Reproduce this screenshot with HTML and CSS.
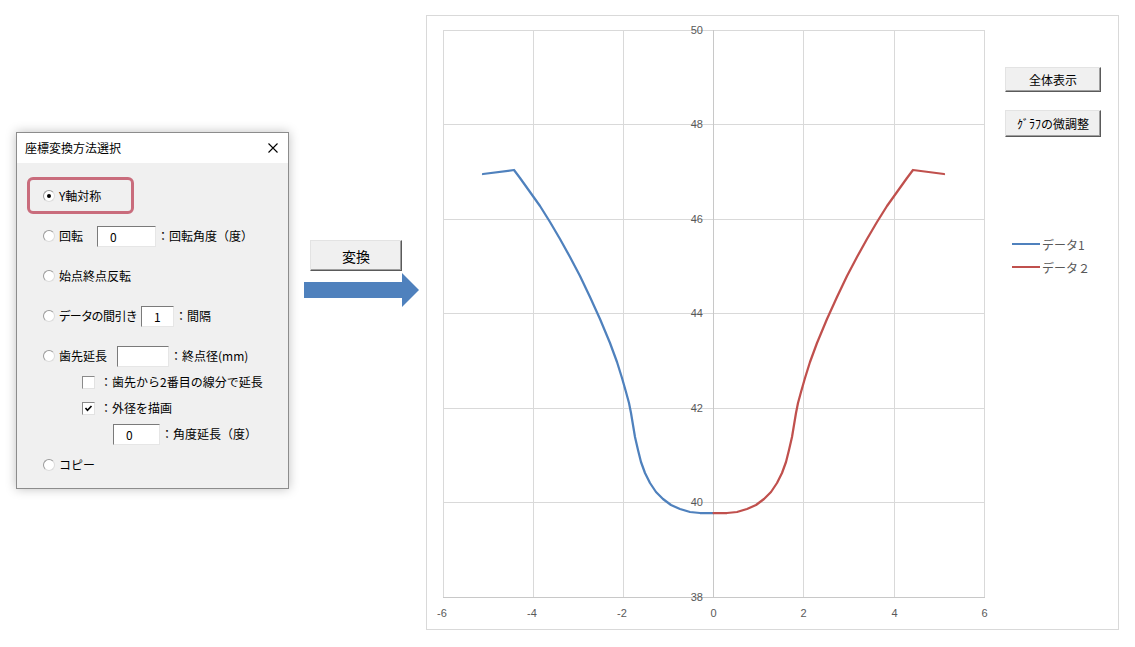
FILE: index.html
```html
<!DOCTYPE html>
<html lang="ja">
    <head>
        <meta charset="UTF-8">
        <title>座標変換方法選択</title>
        <link rel="stylesheet" href="styles.css">
    </head>

    <body>
        <div class="page">
            <!-- Dialog -->
            <div class="dialog">
                <div class="dialog-title">
                    <span>座標変換方法選択</span>
                    <svg class="close" width="10" height="10" viewBox="0 0 10 10">
                        <path d="M0.5 0.5 L9.5 9.5 M9.5 0.5 L0.5 9.5" stroke="#000" stroke-width="1.1" fill="none"/>
                    </svg>
                </div>
                <div class="dialog-body">
                    <div class="picked">
                        <span class="radio on"></span>
                        <span>Y軸対称</span>
                    </div>
                    <div class="row first">
                        <span class="radio"></span>
                        <span class="lbl" style="width:38px">回転</span>
                        <input class="field" type="text" value="0" style="width:59px">
                        <span class="after">：回転角度（度）</span>
                    </div>
                    <div class="row">
                        <span class="radio"></span>
                        <span>始点終点反転</span>
                    </div>
                    <div class="row">
                        <span class="radio"></span>
                        <span class="lbl narrow" style="width:82px">データの間引き</span>
                        <input class="field" type="text" value="1" style="width:33px">
                        <span class="after">：間隔</span>
                    </div>
                    <div class="row">
                        <span class="radio"></span>
                        <span class="lbl" style="width:58px">歯先延長</span>
                        <input class="field" type="text" value="" style="width:52px">
                        <span class="after">：終点径(mm)</span>
                    </div>
                    <div class="row sub">
                        <span class="check"></span>
                        <span class="after-check">：歯先から2番目の線分で延長</span>
                    </div>
                    <div class="row sub">
                        <span class="check">
                            <svg width="11" height="11" viewBox="0 0 11 11">
                                <path d="M2.5 5 L4.5 7.3 L8.5 3" stroke="#000" stroke-width="1.6" fill="none"/>
                            </svg>
                        </span>
                        <span class="after-check">：外径を描画</span>
                    </div>
                    <div class="row sub deep">
                        <input class="field" type="text" value="0" style="width:47px">
                        <span class="after">：角度延長（度）</span>
                    </div>
                    <div class="row last">
                        <span class="radio"></span>
                        <span>コピー</span>
                    </div>
                </div>
            </div>

            <!-- Convert button and arrow -->
            <div class="convert">
                <button class="convert-btn">変換</button>
                <svg class="arrow" width="115" height="34" viewBox="0 0 115 34">
                    <polygon points="0,9 98,9 98,0 115,17 98,34 98,25 0,25" fill="#4f81bd"/>
                </svg>
            </div>

            <!-- Chart -->
            <div class="chart">
                <svg class="plot" width="578" height="613" viewBox="0 0 578 613">
                    <g stroke="#d9d9d9" stroke-width="1">
                        <line x1="16.5" y1="14" x2="16.5" y2="582"/>
                        <line x1="106.5" y1="14" x2="106.5" y2="582"/>
                        <line x1="196.5" y1="14" x2="196.5" y2="582"/>
                        <line x1="376.5" y1="14" x2="376.5" y2="582"/>
                        <line x1="467.5" y1="14" x2="467.5" y2="582"/>
                        <line x1="557.5" y1="14" x2="557.5" y2="582"/>
                        <line x1="16" y1="14.5" x2="558" y2="14.5"/>
                        <line x1="16" y1="108.5" x2="558" y2="108.5"/>
                        <line x1="16" y1="203.5" x2="558" y2="203.5"/>
                        <line x1="16" y1="297.5" x2="558" y2="297.5"/>
                        <line x1="16" y1="392.5" x2="558" y2="392.5"/>
                        <line x1="16" y1="486.5" x2="558" y2="486.5"/>
                    </g>
                    <g stroke="#c8c8c8" stroke-width="1">
                        <line x1="16" y1="581.5" x2="558" y2="581.5"/>
                        <line x1="286.5" y1="14" x2="286.5" y2="582"/>
                    </g>

                    <g class="ticks" text-anchor="end">
                        <text x="276" y="18">50</text>
                        <text x="276" y="112">48</text>
                        <text x="276" y="207">46</text>
                        <text x="276" y="301">44</text>
                        <text x="276" y="396">42</text>
                        <text x="276" y="490">40</text>
                        <text x="276" y="585">38</text>
                    </g>
                    <g class="ticks" text-anchor="middle">
                        <text x="15" y="601">-6</text>
                        <text x="105" y="601">-4</text>
                        <text x="195" y="601">-2</text>
                        <text x="286.5" y="601">0</text>
                        <text x="376.5" y="601">2</text>
                        <text x="467.5" y="601">4</text>
                        <text x="557.5" y="601">6</text>
                    </g>

                    <polyline fill="none" stroke="#4f81bd" stroke-width="2.25" stroke-linejoin="round" stroke-linecap="round"
                        points="56,158 87,154 93,162 103,176 113,190 123,206 133,223 143,241 153,260 163,281 173,303 183,327 190,346 195,362 199,376 202,387 204,397 206,409 208,421 211,434 214,446 218,457 223,467 229,476 236,483 244,489 253,493 263,496 273,497 286.5,497"/>
                    <polyline fill="none" stroke="#c0504d" stroke-width="2.25" stroke-linejoin="round" stroke-linecap="round"
                        points="286.5,497 300,497 310,496 320,493 329,489 337,483 344,476 350,467 355,457 359,446 362,434 365,421 367,409 369,397 371,387 374,376 378,362 383,346 390,327 400,303 410,281 420,260 430,241 440,223 450,206 460,190 470,176 480,162 486,154 517,158"/>
                </svg>

                <div class="chart-side">
                    <button class="chart-btn">全体表示</button>
                    <button class="chart-btn tune">ｸﾞﾗﾌの微調整</button>
                    <div class="legend">
                        <div class="legend-row">
                            <span class="legend-line blue"></span>
                            <span>データ1</span>
                        </div>
                        <div class="legend-row">
                            <span class="legend-line red"></span>
                            <span>データ２</span>
                        </div>
                    </div>
                </div>
            </div>
        </div>
    </body>
</html>
```

FILE: styles.css
```css
* {
    box-sizing: border-box;
    margin: 0;
    padding: 0;
}
body {
    background-color: #fff;
    font-family: "Noto Sans CJK JP", sans-serif;
    font-size: 12px;
    color: #000;
}
.page {
    display: flex;
    align-items: flex-start;
}

/* Dialog */
.dialog {
    margin: 132px 0 0 16px;
    width: 273px;
    height: 357px;
    border: 1px solid #8c8c8c;
    background-color: #f0f0f0;
    box-shadow: 0 0 10px rgba(0, 0, 0, 0.25);
}
.dialog-title {
    height: 30px;
    background-color: #fff;
    display: flex;
    align-items: center;
    justify-content: space-between;
    padding: 0 10px 0 8px;
    line-height: 30px;
}
.dialog-body {
    padding-top: 14px;
}
.picked {
    display: flex;
    align-items: center;
    margin-left: 10px;
    width: 107px;
    height: 37px;
    border: 3px solid #c96c7c;
    border-radius: 6px;
    padding-left: 13px;
}
.row {
    display: flex;
    align-items: center;
    height: 20px;
    line-height: 20px;
    padding-left: 26px;
    margin-top: 20px;
    white-space: nowrap;
}
.row.first {
    margin-top: 12px;
}
.row.sub {
    margin-top: 6px;
    padding-left: 65px;
}
.row.deep {
    padding-left: 96px;
}
.row.last {
    margin-top: 11px;
}
.radio {
    position: relative;
    flex: none;
    width: 12px;
    height: 12px;
    border-radius: 50%;
    border: 1px solid;
    border-color: #9a9a9a #dcdcdc #dcdcdc #9a9a9a;
    background-color: #fff;
    margin-right: 4px;
}
.radio.on::after {
    content: "";
    position: absolute;
    left: 3px;
    top: 3px;
    width: 4px;
    height: 4px;
    border-radius: 50%;
    background-color: #000;
}
.lbl {
    flex: none;
}
.lbl.narrow {
    font-feature-settings: "palt";
    letter-spacing: -0.3px;
}
.field {
    flex: none;
    height: 21px;
    border: 1px solid;
    border-color: #7a7a7a #e6e6e6 #e6e6e6 #7a7a7a;
    background-color: #fff;
    padding-left: 12px;
    font-family: "Noto Sans CJK JP", sans-serif;
    font-size: 12px;
    color: #000;
    outline: none;
}
.after {
    margin-left: 1px;
}
.check {
    flex: none;
    display: flex;
    align-items: center;
    justify-content: center;
    width: 13px;
    height: 13px;
    border: 1px solid;
    border-color: #8a8a8a #e2e2e2 #e2e2e2 #8a8a8a;
    background-color: #fff;
}
.after-check {
    margin-left: 5px;
}

/* Convert */
.convert {
    margin-left: 15px;
    width: 115px;
    padding-top: 240px;
}
.convert-btn {
    display: block;
    margin-left: 6px;
    width: 92px;
    height: 31px;
    font-family: "Noto Sans CJK JP", sans-serif;
    font-size: 14px;
    background-color: #f0f0f0;
    border: 1px solid;
    border-color: #e3e3e3 #5a5a5a #5a5a5a #e3e3e3;
    box-shadow: inset -1px -1px 0 #a0a0a0;
}
.arrow {
    display: block;
    margin-top: 2px;
}

/* Chart */
.chart {
    display: flex;
    margin: 15px 0 0 7px;
    width: 693px;
    height: 615px;
    border: 1px solid #d9d9d9;
}
.plot {
    display: block;
    flex: none;
}
.ticks text {
    font-family: "Liberation Sans", sans-serif;
    font-size: 11px;
    fill: #595959;
}
.chart-side {
    display: flex;
    flex-direction: column;
    align-items: flex-start;
    padding-top: 51px;
}
.chart-btn {
    width: 96px;
    height: 25px;
    font-family: "Noto Sans CJK JP", sans-serif;
    font-size: 12px;
    background-color: #f0f0f0;
    border: 1px solid;
    border-color: #e3e3e3 #5a5a5a #5a5a5a #e3e3e3;
    box-shadow: inset -1px -1px 0 #a0a0a0;
}
.chart-btn.tune {
    height: 27px;
    margin-top: 18px;
}
.legend {
    margin-top: 99px;
}
.legend-row {
    display: flex;
    align-items: center;
    height: 16px;
    margin-bottom: 7px;
    color: #595959;
    font-size: 12px;
}
.legend-line {
    width: 28px;
    height: 2.5px;
    margin: 0 2px 0 7px;
}
.legend-line.blue {
    background-color: #4f81bd;
}
.legend-line.red {
    background-color: #c0504d;
}
```
